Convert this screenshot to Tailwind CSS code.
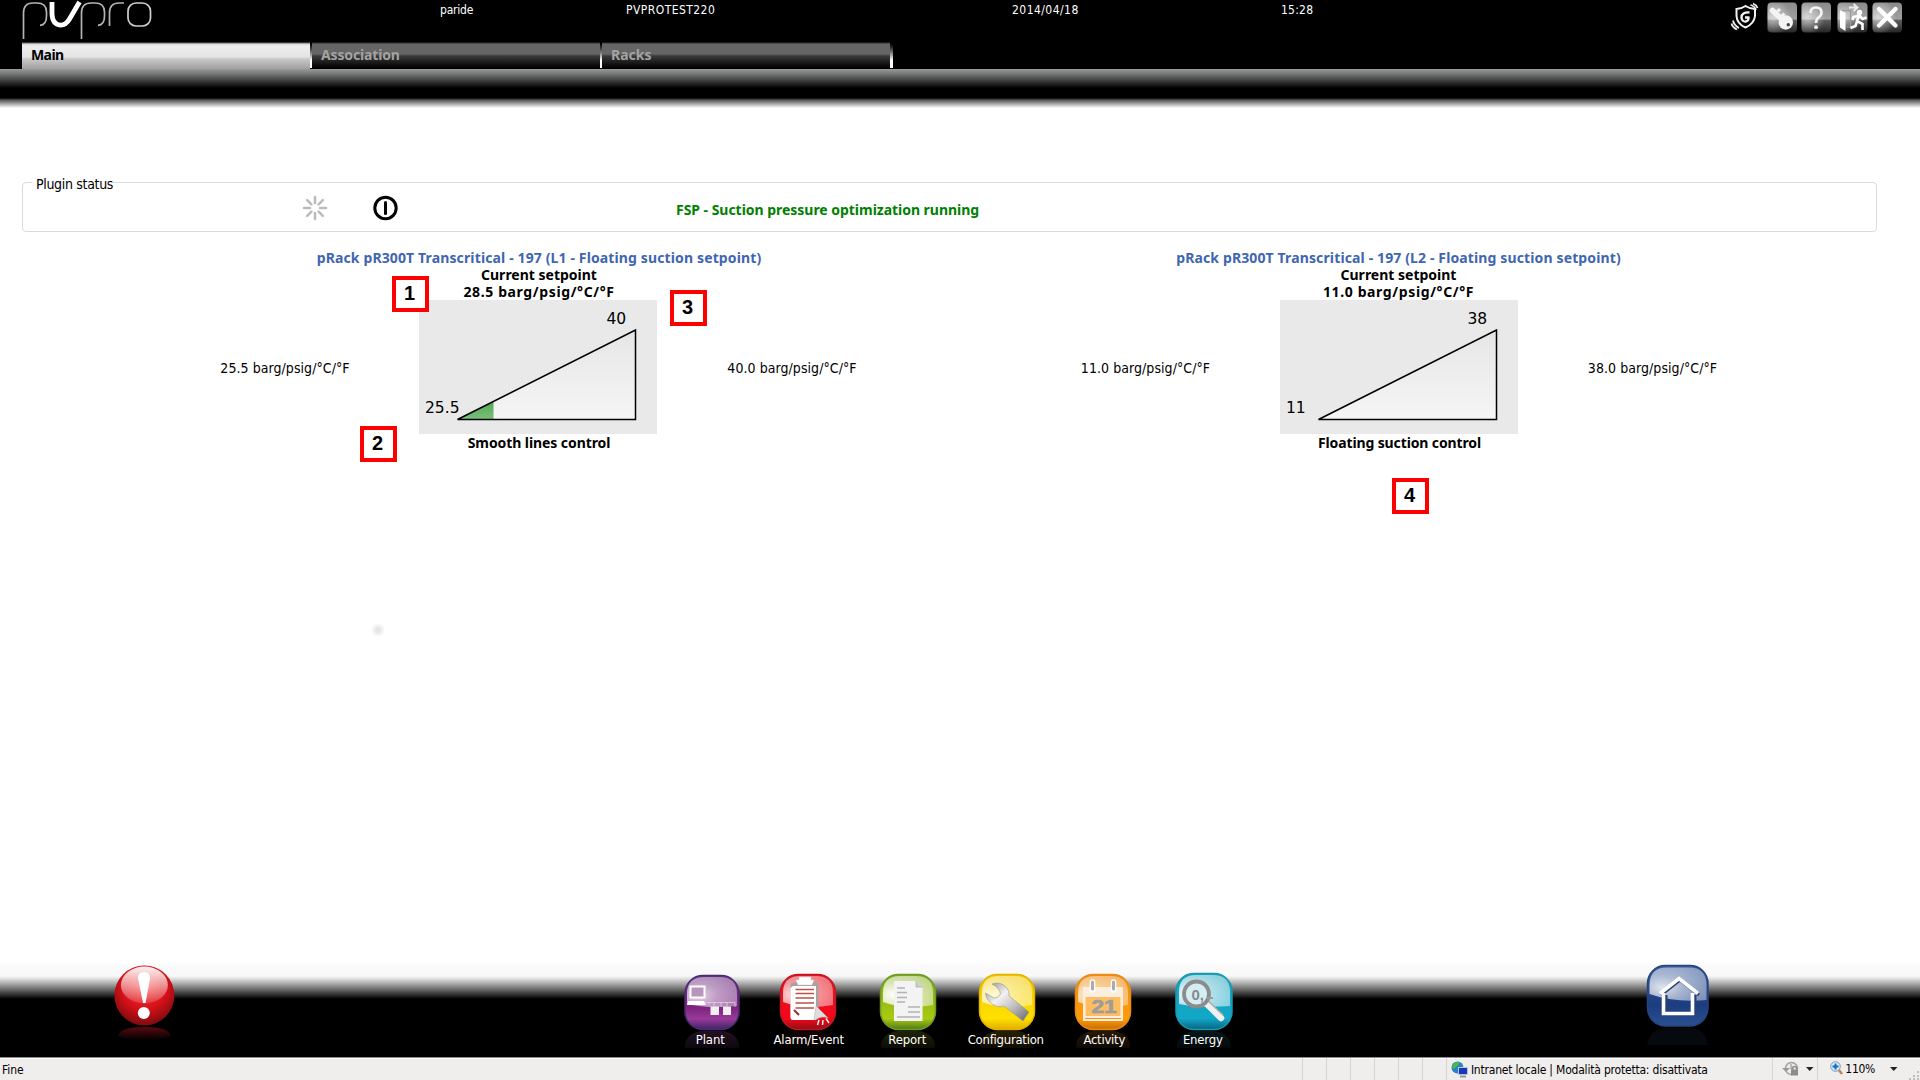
<!DOCTYPE html>
<html lang="it">
<head>
<meta charset="utf-8">
<title>PVPRO</title>
<script src="https://cdn.jsdelivr.net/npm/@tailwindcss/browser@4"></script>
</head>
<body class="w-[1920px] h-[1080px] overflow-hidden bg-white text-black flex flex-col relative font-['DejaVu_Sans_Condensed',sans-serif] text-[14px] leading-[17px]">

<!-- shared gradients -->
<svg class="absolute size-0" aria-hidden="true">
  <defs>
    <radialGradient id="gloss" cx=".22" cy=".6" r=".85"><stop offset="0" stop-color="#fff" stop-opacity="1"/><stop offset=".45" stop-color="#fff" stop-opacity=".68"/><stop offset="1" stop-color="#fff" stop-opacity=".48"/></radialGradient>
    <linearGradient id="btn" x2="0" y2="1"><stop offset="0" stop-color="#8a8a8a"/><stop offset=".55" stop-color="#a0a0a0"/><stop offset=".6" stop-color="#5c5c5c"/><stop offset="1" stop-color="#262626"/></linearGradient>
    <radialGradient id="btnl" cx=".2" cy=".5" r=".6"><stop offset="0" stop-color="#fff" stop-opacity=".6"/><stop offset="1" stop-color="#fff" stop-opacity="0"/></radialGradient>
    <linearGradient id="silver" x2="1" y2="1"><stop offset="0" stop-color="#8d8d8d"/><stop offset=".35" stop-color="#f2f2f2"/><stop offset=".65" stop-color="#bbb"/><stop offset="1" stop-color="#666"/></linearGradient>
    <linearGradient id="fade" x2="0" y2="1"><stop offset="0" stop-color="#fff" stop-opacity=".26"/><stop offset="1" stop-color="#fff" stop-opacity=".1"/></linearGradient>
    <linearGradient id="tri" x2="0" y2="1"><stop offset="0" stop-color="#e6e6e6"/><stop offset="1" stop-color="#f5f5f5"/></linearGradient>
    <linearGradient id="grn" x2="0" y2="1"><stop offset="0" stop-color="#4fa850"/><stop offset="1" stop-color="#7cc07c"/></linearGradient>
    <mask id="refl"><rect y="58" width="70" height="18" fill="url(#fade)"/></mask>
  </defs>
</svg>

<header class="h-[69px] bg-black flex flex-col justify-between shrink-0">
  <div class="h-[42px] flex text-white text-[12px] leading-[14px]">
    <div class="w-[440px] pl-[20px]">
      <svg width="134" height="42" fill="none" stroke="#b4b4b4" stroke-width="1.7">
        <path d="M3.5 39V13Q3.5 3 13 3H17Q26.500 3 26.500 12V16Q26.500 25 20 25.300"/>
        <path d="M61.500 39V13Q61.500 3 71 3H75Q84.500 3 84.500 12V16Q84.500 25 78 25.300"/>
        <path d="M89.500 26V13Q89.500 3 99 3H104"/>
        <rect x="108" y="3" width="22.500" height="23" rx="8" stroke="#d0d0d0"/>
        <path stroke="#fff" stroke-width="4.800" d="M32 2V14Q32.500 24.500 40.500 25.200Q46 25 49.500 19L59.500 2"/>
      </svg>
    </div>
    <div class="w-[186px] pt-[3px] tracking-[-0.2px]">paride</div>
    <div class="w-[386px] pt-[3px] tracking-[0.45px]">PVPROTEST220</div>
    <div class="w-[269px] pt-[3px] tracking-[0.45px]">2014/04/18</div>
    <div class="w-[448px] pt-[3px] tracking-[0.25px]">15:28</div>
    <div class="flex pt-[2px]">
      <svg class="mr-px" width="38" height="32" fill="none" stroke="#f2f2f2" stroke-width="2">
        <path d="M16.500 4Q21 7 26 7V14Q25 22 16.500 25.500Q8 22 7.500 14V7Q12 7 16.500 4Z"/>
        <path stroke-width="2.300" d="M20.500 10.500Q12.500 10 12.500 15.500Q13 20 17 19.500Q20 18.500 19.500 15.500H16"/>
        <path stroke-width="1.800" d="M23 3Q27 4 28.500 8M25.500 1.500Q29 3 30 6M5.500 18.500Q6.500 23.500 11.500 26M4 21.500Q5 25.500 9.500 27.500" transform="translate(-1.500 0)"/>
      </svg>
      <svg class="mr-[3px] -ml-px" width="31" height="32">
        <rect x=".5" y=".5" width="29.500" height="30" rx="4" fill="url(#btn)"/><rect x=".5" y=".5" width="29.500" height="30" rx="4" fill="url(#btnl)"/>
        <path d="M5.500 8.500L16 18.500" stroke="#f4f4f4" stroke-width="5.500" stroke-linecap="round"/><path d="M8 12L13 7M12 16.500L17.500 11.500" stroke="#f4f4f4" stroke-width="3"/>
        <circle cx="18.800" cy="20.500" r="7.200" fill="#f4f4f4"/><circle cx="21.300" cy="22.800" r="1.700" fill="#444"/>
      </svg>
      <svg class="mr-[5px]" width="31" height="32">
        <rect x=".5" y=".5" width="29.500" height="30" rx="4" fill="url(#btn)"/><rect x=".5" y=".5" width="29.500" height="30" rx="4" fill="url(#btnl)"/>
        <path d="M9.500 11Q9.500 5.500 15 5.500Q20.500 5.500 20.500 10.500Q20.500 13.500 17.500 15.500Q15 17.500 15 21" fill="none" stroke="#f4f4f4" stroke-width="2.600"/><circle cx="15" cy="25.200" r="1.900" fill="#f4f4f4"/>
      </svg>
      <svg class="mr-[3px]" width="32" height="32">
        <rect x=".5" y=".5" width="30" height="30" rx="4" fill="url(#btn)"/><rect x=".5" y=".5" width="30" height="30" rx="4" fill="url(#btnl)"/>
        <path d="M3 8L8.500 11V29L3 25.500Z" fill="#fff"/><path d="M5 8.500H13.500V25H9" fill="none" stroke="#999"/>
        <path d="M12 5.500H19M16.500 2L20.500 5.500L16.500 9" fill="none" stroke="#eee" stroke-width="2"/>
        <circle cx="22.500" cy="10.500" r="2.700" fill="#fff"/>
        <path d="M22 13L20 19L25.500 22V28M20 19.500L18.500 24L13.500 26M22 13.500L16.500 15L15.500 18M22.500 13.500L25.500 17L29.500 15.500" fill="none" stroke="#fff" stroke-width="2.600"/>
      </svg>
      <svg width="31" height="32">
        <rect x=".5" y=".5" width="29.500" height="30" rx="4" fill="url(#btn)"/><rect x=".5" y=".5" width="29.500" height="30" rx="4" fill="url(#btnl)"/>
        <path d="M7 7L23.500 23.500M23.500 7L7 23.500" stroke="#fff" stroke-width="4.400" stroke-linecap="round"/>
      </svg>
    </div>
  </div>
  <nav class="h-[27px] pl-[22px] flex font-['Noto_Sans'] font-bold text-[14px] leading-[25px]">
    <a class="w-[288px] pl-[9px] tracking-[-0.6px] bg-[linear-gradient(#000_0px,#d8d8d8_2px,#eee_4px,#e4e4e4_15px,#c8c8c8_17px,#a0a0a0_27px)]">Main</a>
    <i class="w-[2px] h-[26px] bg-linear-to-b from-black to-white to-70%"></i>
    <a class="w-[288px] pl-[9px] tracking-[-0.15px] text-[#a3a3a3] bg-[linear-gradient(#000_0px,#666_2px,#656565_12px,#3a3a3a_14px,#000_26px)]">Association</a>
    <i class="w-[2px] h-[26px] bg-linear-to-b from-black to-white to-70%"></i>
    <a class="w-[288px] pl-[9px] text-[#a3a3a3] bg-[linear-gradient(#000_0px,#666_2px,#656565_12px,#3a3a3a_14px,#000_26px)]">Racks</a>
    <i class="w-[3px] h-[26px] bg-linear-to-b from-black to-white to-70%"></i>
  </nav>
</header>
<div class="h-[39px] shrink-0 bg-[linear-gradient(#999_0px,#7b7e7e_4px,#000_19px,#000_29px,#555_31px,#fff_39px)]"></div>

<main class="flex-1 pt-[66px] px-[22px]">
  <fieldset class="w-[1855px] h-[58px] border border-[#d3dde5] rounded-[4px] pl-[9px]">
    <legend class="pl-[4px] tracking-[-0.32px] h-[17px] leading-[20px]">Plugin status</legend>
    <div class="flex items-center mt-[3px]">
      <svg class="ml-[270px]" width="26" height="28" stroke="#bcbcbc" stroke-width="2.600" stroke-linecap="round">
        <path d="M13 3V9M13 19V25M2 14H8M18 14H24M5.200 6.200L9.400 10.400M16.600 17.600L20.800 21.800M20.800 6.200L16.600 10.400M9.400 17.600L5.200 21.800"/>
      </svg>
      <svg class="ml-[44px]" width="28" height="28" fill="none" stroke="#000" stroke-width="3">
        <circle cx="13.500" cy="14" r="10.700"/><path d="M13.500 8.500V19.500" stroke-linecap="round"/>
      </svg>
      <p class="ml-[276px] pt-[3px] font-['Noto_Sans'] font-bold text-[#008000] tracking-[-0.030px]">FSP - Suction pressure optimization running</p>
    </div>
  </fieldset>

  <div class="flex pl-[87px] pt-[17px]">
    <section class="w-[860px] flex flex-col items-center">
      <h2 class="font-['Noto_Sans'] font-bold text-[#4066b0] tracking-[0.13px]">pRack pR300T Transcritical - 197 (L1 - Floating suction setpoint)</h2>
      <div class="font-['Noto_Sans'] font-bold">Current setpoint</div>
      <div class="font-['Noto_Sans'] font-bold tracking-[0.62px]">28.5 barg/psig/°C/°F</div>
      <div class="grid grid-cols-[268px_238px_270px] items-center justify-items-center">
        <span class="tracking-[0.06px] pt-[2px]">25.5 barg/psig/°C/°F</span>
        <svg class="bg-[#e9e9e9] font-['DejaVu_Sans']" width="238" height="134" font-size="15.500">
          <path d="M38.500 119.500L216.500 30V119.500Z" fill="url(#tri)"/>
          <path d="M38.500 119.500L74.500 101.400V119.500Z" fill="url(#grn)"/>
          <path d="M38.500 119.500L216.500 30V119.500Z" fill="none" stroke="#000" stroke-width="1.500"/>
          <text x="187.500" y="24">40</text><text x="6" y="113">25.5</text>
        </svg>
        <span class="tracking-[0.06px] pt-[2px]">40.0 barg/psig/°C/°F</span>
      </div>
      <div class="font-['Noto_Sans'] font-bold tracking-[-0.080px]">Smooth lines control</div>
    </section>
    <section class="w-[861px] flex flex-col items-center">
      <h2 class="font-['Noto_Sans'] font-bold text-[#4066b0] tracking-[0.13px] -ml-[2px]">pRack pR300T Transcritical - 197 (L2 - Floating suction setpoint)</h2>
      <div class="font-['Noto_Sans'] font-bold -ml-[2px]">Current setpoint</div>
      <div class="font-['Noto_Sans'] font-bold tracking-[0.62px] -ml-[2px]">11.0 barg/psig/°C/°F</div>
      <div class="grid grid-cols-[268px_238px_270px] items-center justify-items-center">
        <span class="tracking-[0.06px] pt-[2px]">11.0 barg/psig/°C/°F</span>
        <svg class="bg-[#e9e9e9] font-['DejaVu_Sans']" width="238" height="134" font-size="15.500">
          <path d="M38.500 119.500L216.500 30V119.500Z" fill="url(#tri)" stroke="#000" stroke-width="1.500"/>
          <text x="187.500" y="24">38</text><text x="6" y="113">11</text>
        </svg>
        <span class="tracking-[0.06px] pt-[2px]">38.0 barg/psig/°C/°F</span>
      </div>
      <div class="font-['Noto_Sans'] font-bold tracking-[-0.12px]">Floating suction control</div>
    </section>
  </div>
</main>

<!-- numbered callouts over the page -->
<b class="absolute left-[392px] top-[276px] w-[37px] h-[36px] border-4 border-[#f00] bg-white flex items-center justify-center pr-[2px] pb-[2px] font-['Liberation_Sans'] text-[20px]">1</b>
<b class="absolute left-[360px] top-[426px] w-[37px] h-[36px] border-4 border-[#f00] bg-white flex items-center justify-center pr-[2px] pb-[2px] font-['Liberation_Sans'] text-[20px]">2</b>
<b class="absolute left-[670px] top-[290px] w-[37px] h-[36px] border-4 border-[#f00] bg-white flex items-center justify-center pr-[2px] pb-[2px] font-['Liberation_Sans'] text-[20px]">3</b>
<b class="absolute left-[1392px] top-[478px] w-[37px] h-[36px] border-4 border-[#f00] bg-white flex items-center justify-center pr-[2px] pb-[2px] font-['Liberation_Sans'] text-[20px]">4</b>
<i class="absolute left-[371px] top-[623px] size-[14px] bg-[radial-gradient(#e6e6e6_20%,#fff_70%)]"></i>

<footer class="h-[95px] shrink-0 flex bg-[linear-gradient(#fff_0px,#fafafa_4px,#f8f8f8_14px,#ddd_17px,#000_37px)]">
  <div class="w-[661px] pl-[112px] pt-px">
    <svg width="66" height="80">
      <defs>
        <radialGradient id="ball" cx=".5" cy=".35" r=".65"><stop offset="0" stop-color="#ff3a3a"/><stop offset=".6" stop-color="#d31018"/><stop offset="1" stop-color="#7d0b10"/></radialGradient>
        <linearGradient id="bg2" x2="0" y2="1"><stop offset="0" stop-color="#fff" stop-opacity=".95"/><stop offset="1" stop-color="#fff" stop-opacity=".12"/></linearGradient>
        <linearGradient id="bsh" x2="0" y2="1"><stop offset="0" stop-color="#5a0a10"/><stop offset="1" stop-color="#000"/></linearGradient>
      </defs>
      <circle cx="32.400" cy="32.500" r="30" fill="url(#ball)"/>
      <ellipse cx="32.400" cy="22" rx="23.500" ry="18.500" fill="url(#bg2)"/>
      <path d="M26 15Q26 9 32 9Q38.500 9 38 16L33.500 40H31Z" fill="#fff"/><circle cx="31.800" cy="50" r="6" fill="#fff"/>
      <path d="M6 73Q8 64 32.500 64Q57 64 59 73Q50 77 32 77Q14 77 6 73Z" fill="url(#bsh)"/>
    </svg>
  </div>
  <nav class="flex text-white text-[13px] leading-[15px] tracking-[-0.1px] pt-[10px]">
    <a class="w-[98.500px] h-[85px] flex flex-col items-center">
      <svg class="shrink-0 relative left-[1.500px]" width="58" height="76">
        <defs><linearGradient id="cP" x2="0" y2="1"><stop stop-color="#6a3080"/><stop offset=".6" stop-color="#7c2480"/><stop offset=".8" stop-color="#9a3a98"/><stop offset="1" stop-color="#3c2468"/></linearGradient></defs>
        <rect x="2" y="3.500" width="54" height="54" rx="18" fill="url(#cP)" stroke="#4b2c72" stroke-width="1.500"/>
        <path d="M4 32V22Q4 5 21 5H37Q54 5 54 22V34Q25 37 4 32Z" fill="url(#gloss)" opacity=".8"/>
        <rect x="7.500" y="14.500" width="14" height="11" fill="#b795bd" stroke="#fff" stroke-width="2"/><path d="M5 29H21L23 33H4Z" fill="#fff"/>
        <path d="M22 30.500H52V35M26 30V33M38 30V35M44 30V35M31 30V35" fill="none" stroke="#e0cfe2" stroke-width=".8"/>
        <path d="M27.500 34.500H36V43H27.500ZM40 34.500H48V43H40Z" fill="#f2eef3"/>
        <rect y="59" x="2" width="54" height="30" rx="18" fill="#8c4490" mask="url(#refl)"/>
      </svg>
      <span class="-mt-[16px] relative">Plant</span>
    </a>
    <a class="w-[98.500px] h-[85px] flex flex-col items-center">
      <svg class="shrink-0 relative -left-[.5px]" width="58" height="76">
        <defs><linearGradient id="cA" x2="0" y2="1"><stop stop-color="#e01822"/><stop offset=".8" stop-color="#f5061a"/><stop offset="1" stop-color="#8c1016"/></linearGradient></defs>
        <rect x="1.500" y="2.500" width="55" height="55" rx="18" fill="url(#cA)" stroke="#c41620" stroke-width="1.500"/>
        <path d="M4 30V21Q4 4 21 4H37Q54 4 54 21V33Q25 38 4 30Z" fill="url(#gloss)" opacity=".85"/>
        <rect x="11.500" y="10.500" width="28" height="37.500" rx="3" fill="#a9a0a0"/><path d="M14 14H37V48H14Q11.500 48 11.500 45V16Z" fill="#fff"/>
        <path d="M20 5H32V8H35L33 13H19L17 8H20Z" fill="#fff" stroke="#ccc" stroke-width=".5"/>
        <path d="M16.500 17.500H35M16.500 21.500H35M16.500 26H35M16.500 31H35M16.500 36H35" stroke="#c05048" stroke-width="1.400"/><path d="M15 38L20 43" stroke="#8c3030" stroke-width="2"/>
        <path d="M37 34L49 46Q44 43 35 48Z" fill="#ddd" stroke="#bbb" stroke-width=".7"/><path d="M40 48L38.500 53M44 48L43.500 53M47 46.500L50 51" stroke="#eee" stroke-width="1.500"/>
        <rect y="59" x="2" width="54" height="30" rx="18" fill="#501418" mask="url(#refl)"/>
      </svg>
      <span class="-mt-[16px] relative">Alarm/Event</span>
    </a>
    <a class="w-[98.500px] h-[85px] flex flex-col items-center">
      <svg class="shrink-0 relative left-px" width="58" height="76">
        <defs><linearGradient id="cR" x2="0" y2="1"><stop stop-color="#7da81c"/><stop offset=".8" stop-color="#a9c912"/><stop offset="1" stop-color="#4d7a16"/></linearGradient></defs>
        <rect x="1.500" y="2.500" width="55" height="55" rx="18" fill="url(#cR)" stroke="#6f9a28" stroke-width="1.500"/>
        <path d="M4 30V21Q4 4 21 4H37Q54 4 54 21V33Q25 38 4 30Z" fill="url(#gloss)"/>
        <path d="M15 9H37L43.500 15V49H15Z" fill="#f3f3f3"/><path d="M37 9V15H43.500" fill="#ccc" stroke="#aaa" stroke-width=".7"/>
        <path d="M18 16H26M18 20.500H28M18 25.500H28M18 30H26M29 35H41M29 40H41M18 45H41" stroke="#b2b2b2" stroke-width="1.500"/>
        <rect y="59" x="2" width="54" height="30" rx="18" fill="#7c8c20" mask="url(#refl)"/>
      </svg>
      <span class="-mt-[16px] relative">Report</span>
    </a>
    <a class="w-[98.500px] h-[85px] flex flex-col items-center">
      <svg class="shrink-0 relative left-px" width="58" height="76">
        <defs><linearGradient id="cC" x2="0" y2="1"><stop stop-color="#f0c800"/><stop offset=".8" stop-color="#ffe000"/><stop offset="1" stop-color="#e0ac00"/></linearGradient></defs>
        <rect x="1.500" y="2.500" width="55" height="55" rx="18" fill="url(#cC)" stroke="#e4b400" stroke-width="1.500"/>
        <path d="M4 30V21Q4 4 21 4H37Q54 4 54 21V33Q25 38 4 30Z" fill="url(#gloss)" opacity=".85"/>
        <path d="M14 12Q23 9 29 16Q32 20 31 24L51 40L45 49L26 34Q18 37 11 29Q7.500 26 7.500 21L16 26Q20 27 22.500 22Q22 16 14 12Z" fill="url(#silver)" stroke="#999" stroke-width=".6"/>
        <rect y="59" x="2" width="54" height="30" rx="18" fill="#a07c10" mask="url(#refl)"/>
      </svg>
      <span class="-mt-[16px] relative tracking-[-0.25px]">Configuration</span>
    </a>
    <a class="w-[98.500px] h-[85px] flex flex-col items-center">
      <svg class="shrink-0 relative -left-px" width="58" height="76">
        <defs><linearGradient id="cY" x2="0" y2="1"><stop stop-color="#ef8a10"/><stop offset=".8" stop-color="#ff9c08"/><stop offset="1" stop-color="#c86c00"/></linearGradient></defs>
        <rect x="1.500" y="2.500" width="55" height="55" rx="18" fill="url(#cY)" stroke="#ea8c18" stroke-width="1.500"/>
        <path d="M4 30V21Q4 4 21 4H37Q54 4 54 21V33Q25 38 4 30Z" fill="url(#gloss)" opacity=".8"/>
        <path d="M9 15H49V49H9Z" fill="#fbeede"/><rect x="11.500" y="25" width="35" height="19" fill="#ffbd62"/><path d="M11 46.500H47" stroke="#f09020"/>
        <path d="M18.500 10V18M39.500 10V18" stroke="#fff" stroke-width="5.500" stroke-linecap="round"/><path d="M18.500 10V17M39.500 10V17" stroke="#aaa" stroke-width="3" stroke-linecap="round"/>
        <text x="30" y="40.500" text-anchor="middle" font-family="Liberation Sans" font-weight="700" font-size="19" fill="#9d9d9d" stroke="#9d9d9d" stroke-width=".7" textLength="25" lengthAdjust="spacingAndGlyphs">21</text>
        <rect y="59" x="2" width="54" height="30" rx="18" fill="#a06420" mask="url(#refl)"/>
      </svg>
      <span class="-mt-[16px] relative tracking-[-0.250px]">Activity</span>
    </a>
    <a class="w-[98.500px] h-[85px] flex flex-col items-center">
      <svg class="shrink-0 relative left-[1px]" width="58" height="76">
        <defs><linearGradient id="cE" x2="0" y2="1"><stop stop-color="#18a0b8"/><stop offset=".8" stop-color="#12a8c8"/><stop offset="1" stop-color="#086480"/></linearGradient></defs>
        <rect x="1" y="1.500" width="56" height="56" rx="18" fill="url(#cE)" stroke="#1c98b0" stroke-width="1.500"/>
        <path d="M4 32V20Q4 3 21 3H38Q55 3 55 20V34Q25 36 4 32Z" fill="url(#gloss)"/>
        <path d="M30 30L46 46" stroke="#f0f0f0" stroke-width="6.500" stroke-linecap="round"/><path d="M32 28L48 43" stroke="#aaa" stroke-width="1.500"/>
        <circle cx="21.500" cy="22" r="12.500" fill="#d4eef4" stroke="#8c8c8c" stroke-width="3.800"/>
        <text x="16.500" y="27.500" font-family="Liberation Sans" font-weight="700" font-size="15" fill="#888">0,</text><path d="M32 26H38" stroke="#999" stroke-width="2"/>
        <rect y="59" x="2" width="54" height="30" rx="18" fill="#205c70" mask="url(#refl)"/>
      </svg>
      <span class="-mt-[16px] relative tracking-[-0.200px]">Energy</span>
    </a>
  </nav>
  <div class="pl-[393px] pt-px">
    <svg width="68" height="86">
      <defs><linearGradient id="cH" x2="0" y2="1"><stop stop-color="#3a5c9c"/><stop offset=".65" stop-color="#1c3c80"/><stop offset="1" stop-color="#2a5090"/></linearGradient></defs>
      <rect x="2.500" y="2.500" width="60.500" height="60.500" rx="18" fill="url(#cH)" stroke="#28447e" stroke-width="1.500"/>
      <path d="M4.500 31V22Q4.500 4.500 22 4.500H44Q61.500 4.500 61.500 22V37Q30 40 4.500 31Z" fill="url(#gloss)" opacity=".85"/>
      <path d="M21 32V50H50V32M16 32L35 17L54 32" fill="none" stroke="#26406f" stroke-width="3"/>
      <path d="M18.500 30V50.500H47.500V30M15 30.500L34 15.500L53 30.500" fill="none" stroke="#fff" stroke-width="3.600"/>
      <path d="M2 82Q5 66 20 65H46Q61 66 63 82Z" fill="#06090e"/>
    </svg>
  </div>
</footer>

<div class="h-[23px] shrink-0 bg-[#f0eded] border-t border-[#8a8a8a] flex text-[12px] leading-[24px] shadow-[inset_0_1px_0_#fff]">
  <span class="w-[1304px] pl-[2px] tracking-[-0.100px]">Fine</span>
  <i class="w-[24px] border-l border-[#d8d4d4]"></i><i class="w-[24px] border-l border-[#d8d4d4]"></i><i class="w-[24px] border-l border-[#d8d4d4]"></i><i class="w-[24px] border-l border-[#d8d4d4]"></i><i class="w-[24px] border-l border-[#d8d4d4]"></i><i class="w-[24px] border-l border-[#d8d4d4]"></i>
  <div class="w-[327px] border-l border-[#d8d4d4] flex pl-[4px]">
    <svg class="mr-[3px] mt-[3px]" width="17" height="17"><circle cx="6.500" cy="6.500" r="6" fill="#2a80c8"/><path d="M2 3Q6 0 8 1Q9 4 5 6Q3 9 1 7ZM7 8L12 5V10H8Z" fill="#4cb848"/><rect x="7.500" y="6.500" width="9" height="7" fill="#1838b8" stroke="#b8c4d8"/><path d="M9 15.500H15" stroke="#999" stroke-width="2"/></svg>
    <span class="tracking-[-0.200px]">Intranet locale | Modalità protetta: disattivata</span>
  </div>
  <div class="w-[45px] border-l border-[#d8d4d4] flex pl-[9px]">
    <svg class="mt-[3px]" width="34" height="17"><circle cx="9.500" cy="7.500" r="6" fill="#ececec" stroke="#a0a0a0" stroke-width="1.500"/><path d="M0 7H8L4 11Z" fill="#999"/><path d="M9 3V8H12" fill="none" stroke="#888"/><rect x="9" y="8.500" width="7" height="6" fill="#8c8c8c"/><path d="M10.500 8.500V6.500Q12.500 4.500 14.500 6.500V8.500" fill="none" stroke="#8c8c8c" stroke-width="1.500"/><path d="M24 6H31.500L27.700 10Z" fill="#222"/></svg>
  </div>
  <div class="border-l border-[#d8d4d4] flex pl-[12px]">
    <svg class="mt-[3px] mr-[2px]" width="13" height="15"><path d="M8 8L12 13" stroke="#c08848" stroke-width="2.500"/><circle cx="5.500" cy="5.500" r="4.800" fill="#d8ecfa" stroke="#7898b8"/><path d="M5.500 2.500V8.500M2.500 5.500H8.500" stroke="#1868c8" stroke-width="2"/></svg>
    <span class="tracking-[-0.300px] leading-[22px]">110%</span>
    <svg class="ml-[15px]" width="30" height="22"><path d="M0 9H7.500L3.700 13Z" fill="#222"/><path d="M27 13h2v2h-2zM23 17h2v2h-2zM27 17h2v2h-2zM19 20h2v2h-2zM23 20h2v2h-2zM27 20h2v2h-2z" fill="#c0bcbc"/></svg>
  </div>
</div>
</body>
</html>
